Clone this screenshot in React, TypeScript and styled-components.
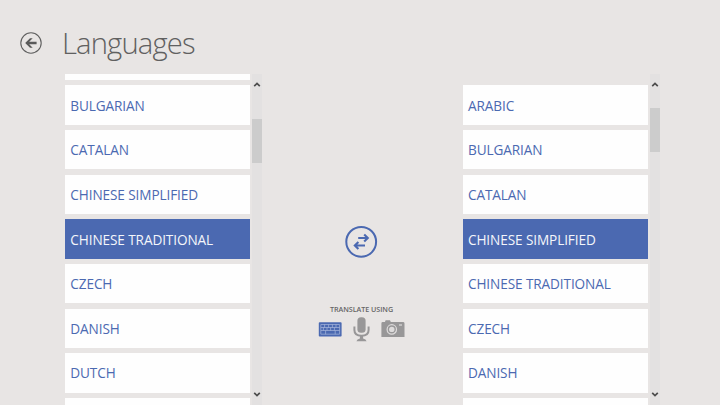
import React from 'react';
import styled, { createGlobalStyle } from 'styled-components';

const BLUE = '#4b69b1';
const GREY = '#989798';

const GlobalStyle = createGlobalStyle`
  * { box-sizing: border-box; }
  html, body { margin: 0; height: 100%; overflow: hidden; background: #e8e5e4; }
  body { font-family: "Open Sans", "Noto Sans", sans-serif; }
`;

const Page = styled.div`
  width: 720px;
  height: 405px;
  overflow: hidden;
  display: flex;
  flex-direction: column;
  background: #e8e5e4;
`;

const Header = styled.header`
  flex: none;
  height: 73.5px;
  display: flex;
  align-items: flex-start;
  padding: 32px 0 0 20px;
`;

const IconButton = styled.button`
  display: block;
  border: 0;
  padding: 0;
  background: none;
  line-height: 0;
  cursor: pointer;
`;

const Title = styled.h1`
  margin: -9px 0 0 20px;
  font-size: 29.2px;
  line-height: 40px;
  font-weight: 300;
  letter-spacing: -0.85px;
  color: #606060;
  white-space: nowrap;
`;

const Body = styled.main`
  flex: 1;
  min-height: 0;
  display: grid;
  grid-template-columns: 197px 200.7px 197.3px;
  padding-left: 65px;
`;

const Picker = styled.section`
  display: flex;
  gap: 2.1px;
  min-height: 0;
  overflow: hidden;
`;

const List = styled.ul`
  flex: none;
  width: 185.4px;
  margin: 0;
  padding: 0;
  list-style: none;
  display: flex;
  flex-direction: column;
  gap: 5.25px;
`;

const Item = styled.li<{ $selected?: boolean }>`
  flex: none;
  height: 39.4px;
  padding-left: 5.3px;
  display: flex;
  align-items: center;
  background: ${p => (p.$selected ? BLUE : '#fefefe')};
  color: ${p => (p.$selected ? '#f4f6fb' : BLUE)};
  font-size: 13.6px;
  letter-spacing: -0.1px;
  white-space: nowrap;
`;

const ClippedItem = styled(Item)<{ $blank?: boolean }>`
  height: 6.7px;
  background: ${p => (p.$blank ? 'transparent' : '#fefefe')};
`;

const Track = styled.div`
  flex: none;
  width: 9.5px;
  height: 332px;
  display: flex;
  flex-direction: column;
  align-items: center;
  padding: 8px 0 9px;
  background: #e3e1e1;
`;

const Thumb = styled.div<{ $gap: number }>`
  width: 100%;
  height: 44px;
  margin-top: ${p => p.$gap}px;
  margin-bottom: auto;
  background: #cccccc;
`;

const Center = styled.div`
  display: flex;
  flex-direction: column;
  align-items: center;
  padding: 151.6px 1.7px 0 0;
`;

const SwapButton = styled(IconButton)`
  margin-right: 1px;
`;

const Caption = styled.div`
  margin-top: 45.6px;
  font-size: 7.2px;
  line-height: 10px;
  font-weight: 600;
  letter-spacing: -0.05px;
  color: #666;
  white-space: nowrap;
`;

const Modes = styled.div`
  display: flex;
  align-items: center;
  gap: 11px;
  margin-top: 3.2px;
`;

function Chevron({ down }: { down?: boolean }) {
  return (
    <svg width="8" height="5" viewBox="0 0 8 5">
      <path d={down ? 'M1.2 0.8 L4 3.6 L6.8 0.8' : 'M1.2 4.2 L4 1.4 L6.8 4.2'} fill="none" stroke="#4c4c4c" strokeWidth="1.7" />
    </svg>
  );
}

function LanguagePicker({ names, selected, thumbGap, first }: {
  names: string[]; selected: string; thumbGap: number; first?: boolean;
}) {
  return (
    <Picker>
      <List>
        <ClippedItem $blank={first} />
        {names.map(n => <Item key={n} $selected={n === selected}>{n}</Item>)}
        <Item />
      </List>
      <Track>
        <Chevron />
        <Thumb $gap={thumbGap} />
        <Chevron down />
      </Track>
    </Picker>
  );
}

export default function App() {
  return (
    <>
      <GlobalStyle />
      <Page>
        <Header>
          <IconButton aria-label="Back">
            <svg width="22" height="22" viewBox="0 0 22 22">
              <circle cx="11" cy="11" r="10.2" fill="none" stroke="#5f5f5f" strokeWidth="1.1" />
              <path d="M5.2 11 L10 6.3 H12.7 L9.2 9.8 H16.6 V12.2 H9.2 L12.7 15.7 H10 Z" fill="#5a5a5a" />
            </svg>
          </IconButton>
          <Title>Languages</Title>
        </Header>
        <Body>
          <LanguagePicker
            names={['BULGARIAN', 'CATALAN', 'CHINESE SIMPLIFIED', 'CHINESE TRADITIONAL', 'CZECH', 'DANISH', 'DUTCH']}
            selected="CHINESE TRADITIONAL"
            thumbGap={32.5}
          />
          <Center>
            <SwapButton aria-label="Swap languages">
              <svg width="33" height="33" viewBox="0 0 33 33">
                <circle cx="16.2" cy="16.8" r="14.9" fill="none" stroke={BLUE} strokeWidth="2" />
                <g fill="none" stroke={BLUE} strokeWidth="2.1">
                  <path d="M13.2 13 H23 M19.2 9.4 L22.8 13 L19.2 16.6" />
                  <path d="M20 20.5 H9.6 M13.4 16.9 L9.8 20.5 L13.4 24.1" />
                </g>
              </svg>
            </SwapButton>
            <Caption>TRANSLATE USING</Caption>
            <Modes>
              <IconButton aria-label="Keyboard">
                <svg width="24" height="15" viewBox="0 0 24 15">
                  <rect x="0.8" y="0.2" width="22.8" height="14.3" rx="0.8" fill={BLUE} />
                  <g fill="none" stroke="#a9b8dc" strokeWidth="0.7">
                    <path d="M2.8 2.5 H21.6 V12.2 H2.8 Z M2.8 5.5 H21.6 M2.8 8.5 H21.6" />
                    <path d="M6.6 2.5 V5.5 M10.6 2.5 V5.5 M14.4 2.5 V5.5 M18 2.5 V5.5 M5.4 5.5 V8.5 M9 5.5 V8.5 M12.6 5.5 V8.5 M16.4 5.5 V8.5 M7.6 8.5 V12.2 M17.2 8.5 V12.2" />
                  </g>
                </svg>
              </IconButton>
              <IconButton aria-label="Microphone">
                <svg width="17" height="25" viewBox="0 0 17 25">
                  <rect x="4.4" y="0.2" width="8.2" height="15.6" rx="3.6" fill={GREY} />
                  <path d="M1.4 9.4 V13 Q1.4 18.8 8.5 18.8 Q15.6 18.8 15.6 13 V9.4" fill="none" stroke={GREY} strokeWidth="2" />
                  <path d="M6.9 19 H10.1 V21.6 Q13 22 13.6 24.3 H3.4 Q4 22 6.9 21.6 Z" fill={GREY} />
                </svg>
              </IconButton>
              <IconButton aria-label="Camera">
                <svg width="24" height="18" viewBox="0 0 24 18">
                  <path d="M1.6 2 H4 L4.6 0.3 H9 L9.8 2 H22 Q23.5 2 23.5 3.4 V17 H0.4 V3.4 Q0.4 2 1.6 2 Z" fill={GREY} />
                  <circle cx="10.8" cy="9.4" r="4.7" fill="none" stroke="#dedcdc" strokeWidth="1.2" />
                  <circle cx="10.8" cy="9.4" r="2.7" fill="#dedcdc" />
                  <path d="M18 5 H21" stroke="#dedcdc" strokeWidth="1.2" />
                </svg>
              </IconButton>
            </Modes>
          </Center>
          <LanguagePicker
            first
            names={['ARABIC', 'BULGARIAN', 'CATALAN', 'CHINESE SIMPLIFIED', 'CHINESE TRADITIONAL', 'CZECH', 'DANISH']}
            selected="CHINESE SIMPLIFIED"
            thumbGap={21.4}
          />
        </Body>
      </Page>
    </>
  );
}
